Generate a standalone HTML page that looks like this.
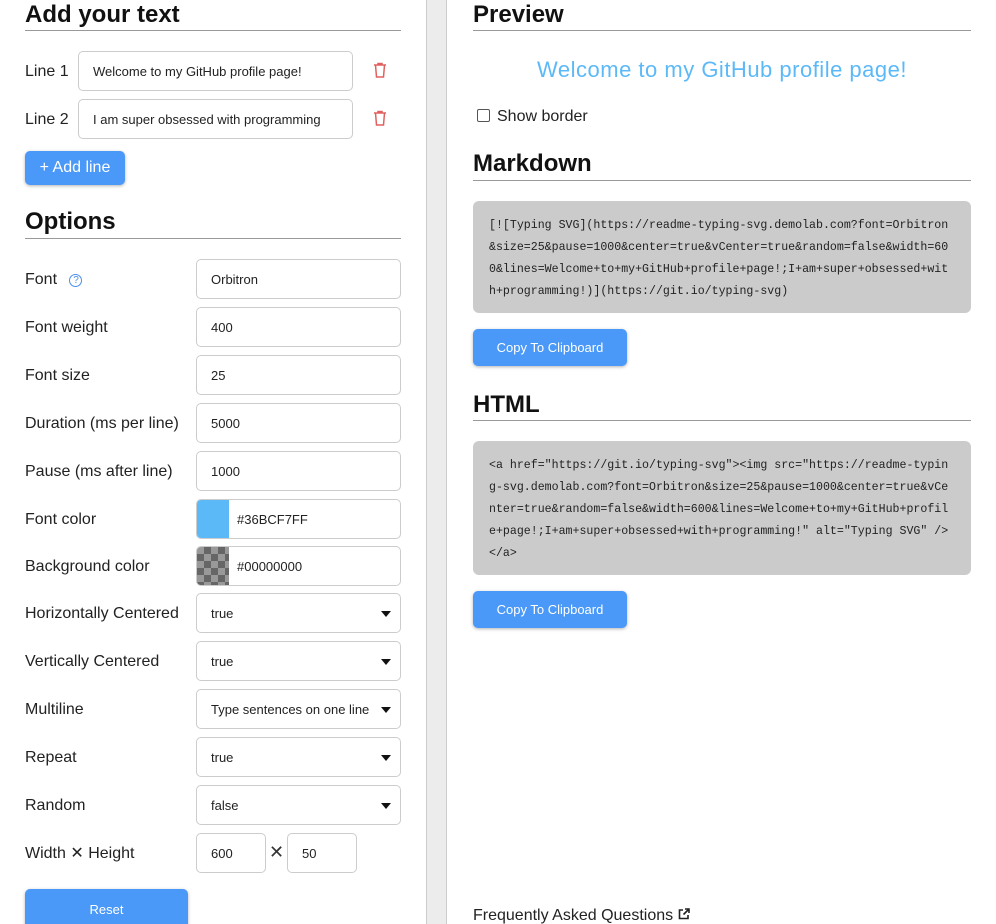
<!DOCTYPE html>
<html style="width:996px;height:924px;overflow:hidden"><head><meta charset="utf-8"><style>
*{box-sizing:border-box;margin:0;padding:0}
body{width:996px;height:924px;overflow:hidden;background:#fff;font-family:"Liberation Sans",sans-serif;color:#222;position:relative}
.a{position:absolute}
h2{position:absolute;font-size:24px;font-weight:bold;color:#111;line-height:30px}
.hr{position:absolute;height:1px;background:#999}
.lbl{position:absolute;font-size:16px;color:#222;line-height:20px}
.in{position:absolute;border:1px solid #ccc;border-radius:5px;background:#fff;font-size:13px;color:#222;padding-left:14px;display:flex;align-items:center;height:40px}
.sel::after{content:"";position:absolute;right:9px;top:17px;border-left:5px solid transparent;border-right:5px solid transparent;border-top:6px solid #111}
.btn{position:absolute;background:#4a98f7;color:#fff;border-radius:5px;display:flex;align-items:center;justify-content:center;box-shadow:0 1px 3px rgba(0,0,0,.3)}
.code{position:absolute;left:473px;width:498px;background:#cbcbcb;border-radius:6px;padding:14px 16px;font-family:"Liberation Mono",monospace;font-size:11.6px;line-height:22px;color:#222;word-break:break-all}
</style></head><body>
<div class="a" style="left:426px;top:0;width:21px;height:924px;background:#ececec;border-left:1px solid #ccc;border-right:1px solid #ccc"></div>

<h2 style="left:25px;top:0">Add your text</h2>
<div class="hr" style="left:25px;top:30px;width:376px"></div>
<div class="lbl" style="left:25px;top:62px">Line 1</div>
<div class="in" style="left:78px;top:51px;width:275px">Welcome to my GitHub profile page!</div>
<div class="lbl" style="left:25px;top:110px">Line 2</div>
<div class="in" style="left:78px;top:99px;width:275px;overflow:hidden;white-space:nowrap">I am super obsessed with programming</div>
<svg class="a" style="left:373px;top:62px" width="14" height="16" viewBox="0 0 14 16" fill="none" stroke="#e06060" stroke-width="1.5"><path d="M1 3h12M5 3V1.5h4V3M2.5 3l1 12h7l1-12"/></svg>
<svg class="a" style="left:373px;top:110px" width="14" height="16" viewBox="0 0 14 16" fill="none" stroke="#e06060" stroke-width="1.5"><path d="M1 3h12M5 3V1.5h4V3M2.5 3l1 12h7l1-12"/></svg>
<div class="btn" style="left:25px;top:151px;width:100px;height:34px;font-size:16px">+ Add line</div>

<h2 style="left:25px;top:207px">Options</h2>
<div class="hr" style="left:25px;top:238px;width:376px"></div>

<div class="lbl" style="left:25px;top:270px">Font <span style="display:inline-block;width:13px;height:13px;border:1.3px solid #4a8ff0;border-radius:50%;color:#4a8ff0;font-size:10px;line-height:11px;text-align:center;margin-left:8px;vertical-align:1px">?</span></div>
<div class="in" style="left:196px;top:259px;width:205px">Orbitron</div>
<div class="lbl" style="left:25px;top:318px">Font weight</div>
<div class="in" style="left:196px;top:307px;width:205px">400</div>
<div class="lbl" style="left:25px;top:366px">Font size</div>
<div class="in" style="left:196px;top:355px;width:205px">25</div>
<div class="lbl" style="left:25px;top:414px">Duration (ms per line)</div>
<div class="in" style="left:196px;top:403px;width:205px">5000</div>
<div class="lbl" style="left:25px;top:462px">Pause (ms after line)</div>
<div class="in" style="left:196px;top:451px;width:205px">1000</div>
<div class="lbl" style="left:25px;top:510px">Font color</div>
<div class="in" style="left:196px;top:499px;width:205px;padding-left:0;overflow:hidden"><div style="width:32px;height:38px;background:#5cb9f8;margin-right:8px"></div>#36BCF7FF</div>
<div class="lbl" style="left:25px;top:557px">Background color</div>
<div class="in" style="left:196px;top:546px;width:205px;padding-left:0;overflow:hidden"><div style="width:32px;height:38px;margin-right:8px;background-color:#999;background-image:linear-gradient(45deg,#666 25%,transparent 25%,transparent 75%,#666 75%),linear-gradient(45deg,#666 25%,transparent 25%,transparent 75%,#666 75%);background-size:14px 14px;background-position:0 0,7px 7px"></div>#00000000</div>
<div class="lbl" style="left:25px;top:604px">Horizontally Centered</div>
<div class="in sel" style="left:196px;top:593px;width:205px">true</div>
<div class="lbl" style="left:25px;top:652px">Vertically Centered</div>
<div class="in sel" style="left:196px;top:641px;width:205px">true</div>
<div class="lbl" style="left:25px;top:700px">Multiline</div>
<div class="in sel" style="left:196px;top:689px;width:205px;white-space:nowrap;overflow:hidden">Type sentences on one line</div>
<div class="lbl" style="left:25px;top:748px">Repeat</div>
<div class="in sel" style="left:196px;top:737px;width:205px">true</div>
<div class="lbl" style="left:25px;top:796px">Random</div>
<div class="in sel" style="left:196px;top:785px;width:205px">false</div>
<div class="lbl" style="left:25px;top:844px">Width ✕ Height</div>
<div class="in" style="left:196px;top:833px;width:70px">600</div>
<div class="a" style="left:269px;top:842px;font-size:18px;color:#333">✕</div>
<div class="in" style="left:287px;top:833px;width:70px">50</div>
<div class="btn" style="left:25px;top:889px;width:163px;height:40px;font-size:13px">Reset</div>

<h2 style="left:473px;top:0">Preview</h2>
<div class="hr" style="left:473px;top:30px;width:498px"></div>
<div class="a" style="left:473px;width:498px;top:57px;text-align:center;font-size:22px;color:#5cb9f8;letter-spacing:0.5px">Welcome to my GitHub profile page!</div>
<div class="a" style="left:477px;top:109px;width:13px;height:13px;border:1px solid #555;border-radius:2px"></div>
<div class="lbl" style="left:497px;top:107px">Show border</div>

<h2 style="left:473px;top:149px">Markdown</h2>
<div class="hr" style="left:473px;top:180px;width:498px"></div>
<div class="code" style="top:201px;height:112px">[![Typing SVG](https://readme-typing-svg.demolab.com?font=Orbitron&amp;size=25&amp;pause=1000&amp;center=true&amp;vCenter=true&amp;random=false&amp;width=600&amp;lines=Welcome+to+my+GitHub+profile+page!;I+am+super+obsessed+with+programming!)](https://git.io/typing-svg)</div>
<div class="btn" style="left:473px;top:329px;width:154px;height:37px;font-size:13px">Copy To Clipboard</div>

<h2 style="left:473px;top:390px">HTML</h2>
<div class="hr" style="left:473px;top:420px;width:498px"></div>
<div class="code" style="top:441px;height:134px">&lt;a href="https://git.io/typing-svg"&gt;&lt;img src="https://readme-typing-svg.demolab.com?font=Orbitron&amp;size=25&amp;pause=1000&amp;center=true&amp;vCenter=true&amp;random=false&amp;width=600&amp;lines=Welcome+to+my+GitHub+profile+page!;I+am+super+obsessed+with+programming!" alt="Typing SVG" /&gt;&lt;/a&gt;</div>
<div class="btn" style="left:473px;top:591px;width:154px;height:37px;font-size:13px">Copy To Clipboard</div>

<div class="lbl" style="left:473px;top:906px">Frequently Asked Questions <svg width="12" height="12" viewBox="0 0 12 12" fill="none" stroke="#222" stroke-width="1.6" style="vertical-align:0"><path d="M5 2H1.5v8.5H10V7M7 1h4v4M11 1L5.5 6.5"/></svg></div>
</body></html>
